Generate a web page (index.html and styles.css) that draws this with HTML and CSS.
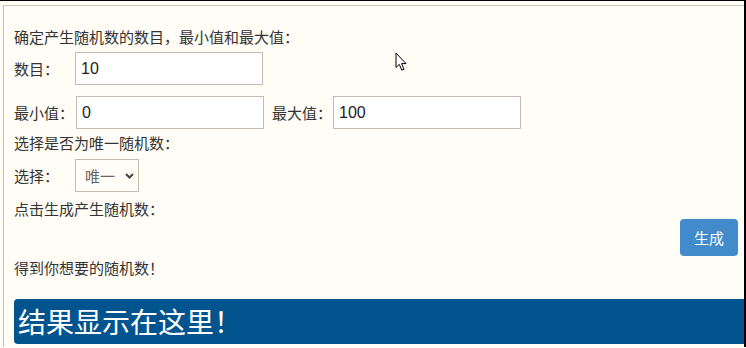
FILE: index.html
```html
<!DOCTYPE html>
<html lang="zh-CN">
<head>
<meta charset="utf-8">
<title>随机数生成</title>
<link rel="stylesheet" href="styles.css">
</head>
<body>
<div class="frame">
  <div class="panel">
    <div class="line first">确定产生随机数的数目，最小值和最大值：</div>
    <div class="row r1">
      <span class="lbl">数目：</span><input class="field" type="text" value="10">
    </div>
    <div class="row r2">
      <span class="lbl lbl-min">最小值：</span><input class="field" type="text" value="0"><span class="lbl lbl-max">最大值：</span><input class="field" type="text" value="100">
    </div>
    <div class="line l3">选择是否为唯一随机数：</div>
    <div class="row r3">
      <span class="lbl">选择：</span><span class="sel-wrap"><select class="sel"><option>唯一</option><option>不唯一</option></select><svg class="chev" width="9" height="6" viewBox="0 0 9 6"><path d="M1 1 L4.5 4.5 L8 1" fill="none" stroke="#444" stroke-width="2"/></svg></span>
    </div>
    <div class="line l4">点击生成产生随机数：</div>
    <div class="btn-row"><button class="btn">生成</button></div>
    <div class="line l5">得到你想要的随机数！</div>
    <div class="result">结果显示在这里！</div>
  </div>
  <svg class="cursor" width="13" height="20" viewBox="0 0 13 20"><path d="M1 1 L1 15.5 L4.3 12.4 L6.8 18.2 L9 17.3 L6.6 11.6 L11 11.6 Z" fill="#fff" stroke="#000" stroke-width="1" stroke-linejoin="round"/></svg>
</div>
</body>
</html>
```
FILE: styles.css
```css
html, body {
  margin: 0;
  padding: 0;
}
body {
  background: #fffdf6;
  font-family: "Noto Sans CJK SC", "Microsoft YaHei", sans-serif;
  font-size: 15px;
  color: #333;
  overflow: hidden;
}
.frame {
  position: relative;
  height: 347px;
  border-top: 1px solid #000;
  border-right: 2px solid #000;
  box-sizing: border-box;
  width: 746px;
}
.panel {
  margin: 4px 0 0 3px;
  border-top: 1px solid #cdbeb6;
  border-left: 1px solid #cdbeb6;
  padding: 0 6px 0 10px;
  height: 342px;
  box-sizing: border-box;
}
.line {
  line-height: 20px;
  height: 20px;
}
.first { margin-top: 21px; }
.row {
  display: flex;
  align-items: center;
}
.r1 { margin-top: 5px; }
.r2 { margin-top: 11px; }
.lbl {
  display: inline-block;
  flex: 0 0 61px;
  width: 61px;
  line-height: 20px;
  white-space: nowrap;
  overflow: visible;
}
.lbl-min { flex-basis: 62px; width: 62px; }
.lbl-max { margin-left: 8px; flex-basis: 61px; width: 61px; }
.field {
  flex: 0 0 188px;
  width: 188px;
  height: 33px;
  box-sizing: border-box;
  border: 1px solid #c9bab1;
  background: #fff;
  padding: 0 5px;
  font-family: "Liberation Sans", Arial, sans-serif;
  font-size: 16px;
  color: #222;
  outline: none;
}
.l3 { margin-top: 4px; }
.r3 { margin-top: 6px; }
.sel-wrap {
  position: relative;
  display: inline-block;
}
.sel {
  appearance: none;
  -webkit-appearance: none;
  width: 64px;
  height: 33px;
  box-sizing: border-box;
  border: 1px solid #c9bab1;
  background: transparent;
  border-radius: 0;
  padding: 0 0 0 9px;
  font-family: "Noto Sans CJK SC", sans-serif;
  font-size: 15px;
  color: #666;
  outline: none;
}
.chev {
  position: absolute;
  right: 5px;
  top: 14px;
}
.l4 { margin-top: 7px; }
.btn-row {
  display: flex;
  justify-content: flex-end;
}
.btn {
  width: 58px;
  height: 37px;
  border: none;
  border-radius: 4px;
  background: #428bca;
  color: #fff;
  font-family: "Noto Sans CJK SC", sans-serif;
  font-size: 15px;
  padding: 0;
}
.l5 { margin-top: 2px; }
.result {
  margin-top: 21px;
  margin-right: -6px;
  height: 45px;
  background: #02548f;
  color: #fff;
  border-radius: 4px 0 0 4px;
  font-size: 28px;
  line-height: 45px;
  padding-left: 4px;
}
.cursor {
  position: absolute;
  left: 395px;
  top: 51px;
}
```
